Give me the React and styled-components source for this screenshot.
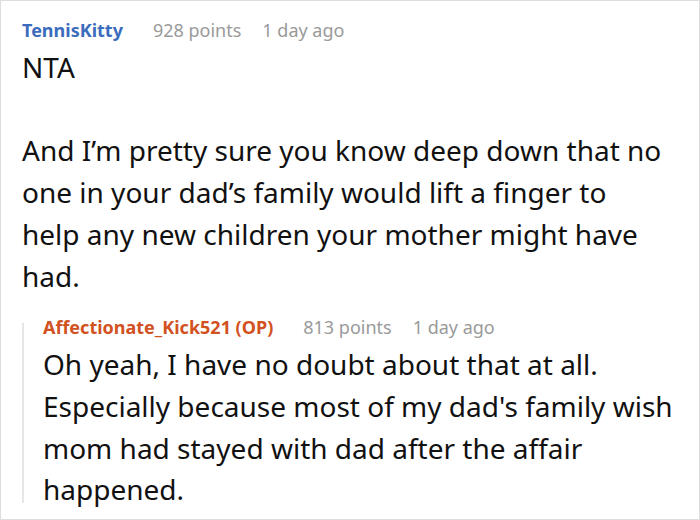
import React from 'react';
import styled, { createGlobalStyle } from 'styled-components';

const GlobalStyle = createGlobalStyle`
  html, body {
    margin: 0;
    padding: 0;
    background: #fff;
  }
  body {
    font-family: "Noto Sans", "Open Sans", sans-serif;
    color: #111;
  }
`;

const Frame = styled.div`
  box-sizing: border-box;
  width: 700px;
  height: 520px;
  border: 1px solid #dedede;
  padding: 17px 18px 0 21px;
  overflow: hidden;
`;

const Comment = styled.div`
  display: flex;
  flex-direction: column;
`;

const Meta = styled.div`
  display: flex;
  align-items: baseline;
  gap: 21px;
  font-size: 18px;
  line-height: 24px;
  white-space: nowrap;
`;

const Author = styled.span`
  font-weight: 700;
  color: ${(p) => (p.$op ? '#d2521f' : '#3b6cbd')};
  margin-right: 9px;
`;

const Muted = styled.span`
  color: #9a9a9a;
`;

const Body = styled.p`
  margin: 5px 0 0;
  max-width: ${(p) => p.$max || 'none'};
  font-size: 28px;
  line-height: 41.7px;
  white-space: pre-wrap;
`;

const Reply = styled.div`
  position: relative;
  margin-top: 18px;
  padding-left: 21px;
  display: flex;
  flex-direction: column;

  &::before {
    content: '';
    position: absolute;
    left: 0;
    top: 8px;
    bottom: 8px;
    width: 2px;
    background: #e6e6e6;
  }
`;

export default function App() {
  return (
    <>
      <GlobalStyle />
      <Frame>
        <Comment>
          <Meta>
            <Author>TennisKitty</Author>
            <Muted>928 points</Muted>
            <Muted>1 day ago</Muted>
          </Meta>
          <Body $max="640px">
            {'NTA\n\nAnd I’m pretty sure you know deep down that no one in your dad’s family would lift a finger to help any new children your mother might have had.'}
          </Body>
          <Reply>
            <Meta>
              <Author $op>Affectionate_Kick521 (OP)</Author>
              <Muted>813 points</Muted>
              <Muted>1 day ago</Muted>
            </Meta>
            <Body>
              Oh yeah, I have no doubt about that at all. Especially because most of my dad's family wish mom had stayed with dad after the affair happened.
            </Body>
          </Reply>
        </Comment>
      </Frame>
    </>
  );
}
